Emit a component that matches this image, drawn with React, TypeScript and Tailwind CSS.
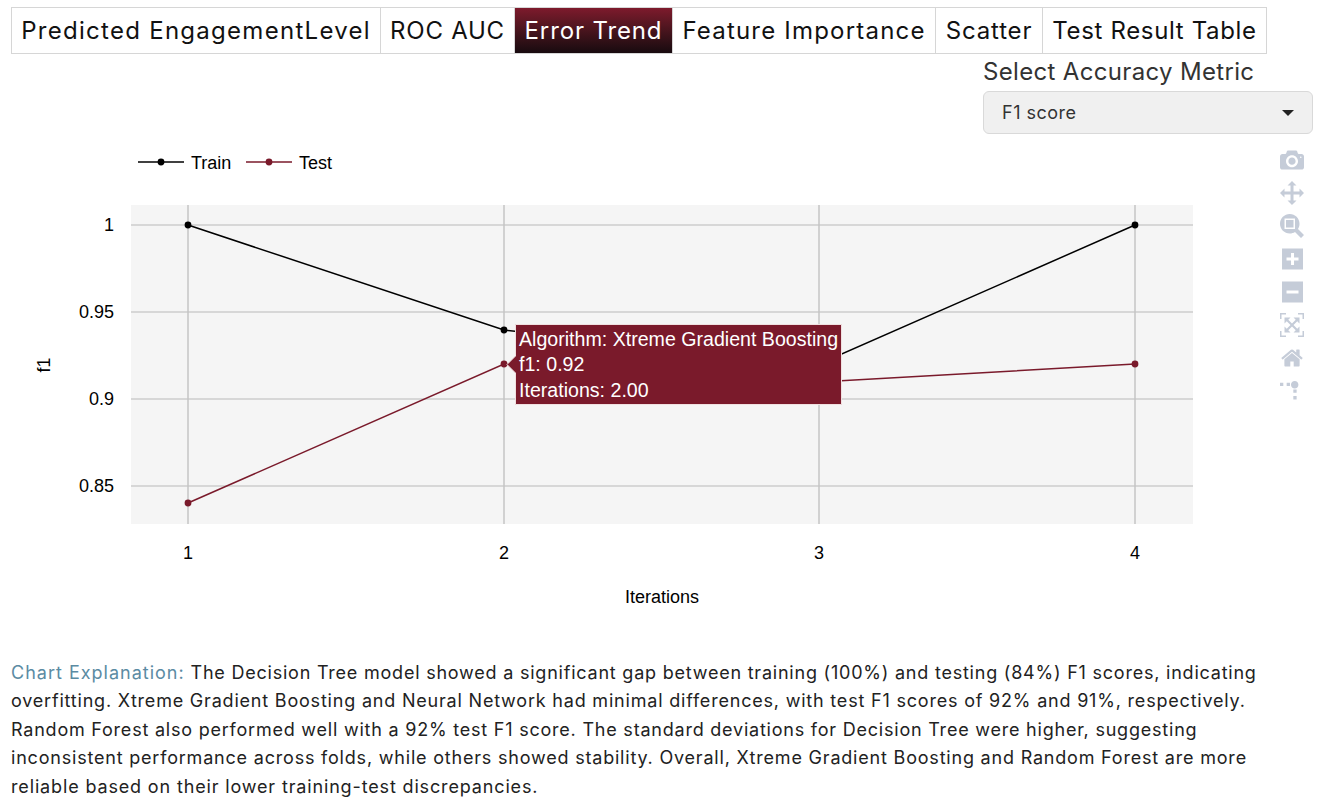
const tabs = [
  { label: "Predicted EngagementLevel", w: "w-[370px]", tr: "tracking-[1.28px]" },
  { label: "ROC AUC", w: "w-[135px]", tr: "tracking-[0.75px]" },
  { label: "Error Trend", w: "w-[159px]", tr: "tracking-[0.87px]", active: true },
  { label: "Feature Importance", w: "w-[264px]", tr: "tracking-[1.2px]" },
  { label: "Scatter", w: "w-[108px]", tr: "tracking-[0.85px]" },
  { label: "Test Result Table", w: "w-[225px]", tr: "tracking-[0.65px]" },
];

const ICON_FLIP = "matrix(1 0 0 -1 0 850)";
const icons: { vb: string; d: string; t: string; w: string }[] = [
  { vb: "0 0 1000 1000", t: ICON_FLIP, w: "w-[24px]", d: "m500 450c-83 0-150-67-150-150 0-83 67-150 150-150 83 0 150 67 150 150 0 83-67 150-150 150z m400 150h-120c-16 0-34 13-39 29l-31 93c-6 15-23 28-40 28h-340c-16 0-34-13-39-28l-31-94c-6-15-23-28-40-28h-120c-55 0-100-45-100-100v-450c0-55 45-100 100-100h800c55 0 100 45 100 100v450c0 55-45 100-100 100z m-400-550c-138 0-250 112-250 250 0 138 112 250 250 250 138 0 250-112 250-250 0-138-112-250-250-250z m365 380c-19 0-35 16-35 35 0 19 16 35 35 35 19 0 35-16 35-35 0-19-16-35-35-35z" },
  { vb: "0 0 1000 1000", t: ICON_FLIP, w: "w-[24px]", d: "m1000 350l-187 188 0-125-250 0 0 250 125 0-188 187-187-187 125 0 0-250-250 0 0 125-188-188 186-187 0 125 252 0 0-250-125 0 187-188 188 188-125 0 0 250 250 0 0-126 187 188z" },
  { vb: "0 0 1000 1000", t: ICON_FLIP, w: "w-[24px]", d: "m1000-25l-250 251c40 63 63 138 63 218 0 224-182 406-407 406-224 0-406-182-406-406s183-406 407-406c80 0 155 22 218 62l250-250 125 125z m-812 250l0 438 437 0 0-438-437 0z m62 375l313 0 0-312-313 0 0 312z" },
  { vb: "0 0 875 1000", t: ICON_FLIP, w: "w-[21px]", d: "m1 787l0-875 875 0 0 875-875 0z m687-500l-187 0 0-187-125 0 0 187-188 0 0 125 188 0 0 187 125 0 0-187 187 0 0-125z" },
  { vb: "0 0 875 1000", t: ICON_FLIP, w: "w-[21px]", d: "m0 788l0-876 875 0 0 876-875 0z m688-500l-500 0 0 125 500 0 0-125z" },
  { vb: "0 0 1000 1000", t: ICON_FLIP, w: "w-[24px]", d: "m250 850l-187 0-63 0 0-62 0-188 63 0 0 188 187 0 0 62z m688 0l-188 0 0-62 188 0 0-188 62 0 0 188 0 62-62 0z m-875-938l0 188-63 0 0-188 0-62 63 0 187 0 0 62-187 0z m875 188l0-188-188 0 0-62 188 0 62 0 0 62 0 188-62 0z m-125 188l-1 0-93-94-156 156 156 156 92-93 2 0 0 250-250 0 0-2 93-92-156-156-156 156 94 92 0 2-250 0 0-250 0 0 93 93 157-156-157-156-93 94 0 0 0-250 250 0 0 0-94 93 156 157 156-157-93-93 0 0 250 0 0 250z" },
  { vb: "0 0 928.6 1000", t: ICON_FLIP, w: "w-[22px]", d: "m786 296v-267q0-15-11-26t-25-10h-214v214h-143v-214h-214q-15 0-25 10t-11 26v267q0 1 0 2t0 2l321 264 321-264q1-1 1-4z m124 39l-34-41q-5-5-12-6h-2q-7 0-12 3l-386 322-386-322q-7-4-13-4-7 2-12 7l-35 41q-4 5-3 13t6 12l401 334q18 15 42 15t43-15l136-114v109q0 8 5 13t13 5h107q8 0 13-5t5-13v-227l122-102q5-5 6-12t-4-13z" },
  { vb: "0 0 1000 1000", t: "matrix(1.5 0 0 -1.5 0 850)", w: "w-[24px]", d: "M512 409c0-57-46-104-103-104-57 0-104 47-104 104 0 57 47 103 104 103 57 0 103-46 103-103z m-327-39l92 0 0 92-92 0 0-92z m-185 0l92 0 0 92-92 0 0-92z m370-186l92 0 0 93-92 0 0-93z m0-184l92 0 0 92-92 0 0-92z" },
];

const xs = [188, 504, 819, 1135];
const ys: [number, string][] = [[225, "1"], [312, "0.95"], [399, "0.9"], [486, "0.85"]];
const train = [[188, 225], [504, 330], [819, 364], [1135, 225]];
const test = [[188, 503], [504, 364], [819, 382], [1135, 364]];
const MAROON = "#7a1a2b";

function Series({ pts, color }: { pts: number[][]; color: string }) {
  return (
    <g>
      <polyline points={pts.map((p) => p.join(",")).join(" ")} fill="none" stroke={color} strokeWidth="1.5" />
      {pts.map((p) => <circle key={p[0]} cx={p[0]} cy={p[1]} r="3.4" fill={color} />)}
    </g>
  );
}

function Chart() {
  return (
    <svg viewBox="0 140 1325 480" className="block w-[1325px] h-[480px]" fontFamily="'Liberation Sans', Arial, sans-serif" fontSize="18" fill="#000">
      <line x1="138" x2="184" y1="162" y2="162" stroke="#000" strokeWidth="1.5" />
      <circle cx="161" cy="162" r="3.4" fill="#000" />
      <text x="191" y="169">Train</text>
      <line x1="246" x2="292" y1="162" y2="162" stroke={MAROON} strokeWidth="1.5" />
      <circle cx="269" cy="162" r="3.4" fill={MAROON} />
      <text x="299" y="169">Test</text>

      <rect x="131" y="205" width="1062" height="319" fill="#f5f5f5" />
      {ys.map(([y]) => <line key={y} x1="131" x2="1193" y1={y} y2={y} stroke="#cccccc" strokeWidth="1.7" />)}
      {xs.map((x) => <line key={x} x1={x} x2={x} y1="205" y2="524" stroke="#c4c4c4" strokeWidth="1.5" />)}
      {ys.map(([y, l]) => <text key={y} x="114" y={y + 6} textAnchor="end">{l}</text>)}
      {xs.map((x, i) => <text key={x} x={x} y="559" textAnchor="middle">{i + 1}</text>)}
      <text x="662" y="603" textAnchor="middle">Iterations</text>
      <text transform="translate(50 365) rotate(-90)" textAnchor="middle">f1</text>

      <Series pts={train} color="#000" />
      <Series pts={test} color={MAROON} />

      <path d="M515.5 324.5H841.5V404.5H515.5V373L507 364.5L515.5 356Z" fill={MAROON} stroke="#f0e0e0" strokeWidth="1" />
      <g fill="#fff" fontSize="19.6">
        <text x="519" y="346">Algorithm: Xtreme Gradient Boosting</text>
        <text x="519" y="371">f1: 0.92</text>
        <text x="519" y="397">Iterations: 2.00</text>
      </g>
    </svg>
  );
}

export default function App() {
  return (
    <div className="w-[1325px] h-[801px] overflow-hidden bg-white font-['Inter',sans-serif] text-[#111]">
      <div className="flex ml-[11px] pt-[7px]">
        {tabs.map((t) => (
          <div
            key={t.label}
            className={`${t.w} ${t.tr} h-[47px] flex items-center justify-center whitespace-nowrap text-[24px] border border-[#d6d6d6] -mr-px ${t.active ? "bg-gradient-to-b from-[#7e1a2c] to-[#180a0f] text-white" : "bg-white text-[#111]"}`}
          >
            {t.label}
          </div>
        ))}
      </div>

      <div className="ml-[983px] w-[330px] mt-[3px]">
        <div className="text-[24px] leading-[30px] tracking-[0.33px] text-[#333] whitespace-nowrap">Select Accuracy Metric</div>
        <div className="h-[43px] mt-[4px] px-[18px] flex items-center justify-between rounded-[6px] border border-[#d9d9d9] bg-[#f0f0f0] text-[18px] tracking-[0.5px] text-[#333]">
          <span>F1 score</span>
          <span className="w-0 h-0 border-x-[6px] border-x-transparent border-t-[6px] border-t-[#222]" />
        </div>
      </div>

      <div className="relative mt-[6px]">
        <Chart />
        <div className="absolute left-[1280px] top-[3px] w-[24px] flex flex-col items-center">
          {icons.map((ic, i) => (
            <div key={i} className="h-[33px] w-[24px] flex items-center justify-center">
              <svg viewBox={ic.vb} className={`${ic.w} h-[24px]`} fill="#c5ccd8">
                <path d={ic.d} transform={ic.t} />
              </svg>
            </div>
          ))}
        </div>
      </div>

      <div className="ml-[11px] mt-[39px] text-[18px] leading-[28.4px] text-[#222] tracking-[0.8px] whitespace-nowrap">
        <div className="tracking-[0.78px]"><span className="text-[#5b8ba3] tracking-[1px]">Chart Explanation:</span> The Decision Tree model showed a significant gap between training (100%) and testing (84%) F1 scores, indicating</div>
        <div>overfitting. Xtreme Gradient Boosting and Neural Network had minimal differences, with test F1 scores of 92% and 91%, respectively.</div>
        <div className="tracking-[0.78px]">Random Forest also performed well with a 92% test F1 score. The standard deviations for Decision Tree were higher, suggesting</div>
        <div>inconsistent performance across folds, while others showed stability. Overall, Xtreme Gradient Boosting and Random Forest are more</div>
        <div className="tracking-[0.85px]">reliable based on their lower training-test discrepancies.</div>
      </div>
    </div>
  );
}
